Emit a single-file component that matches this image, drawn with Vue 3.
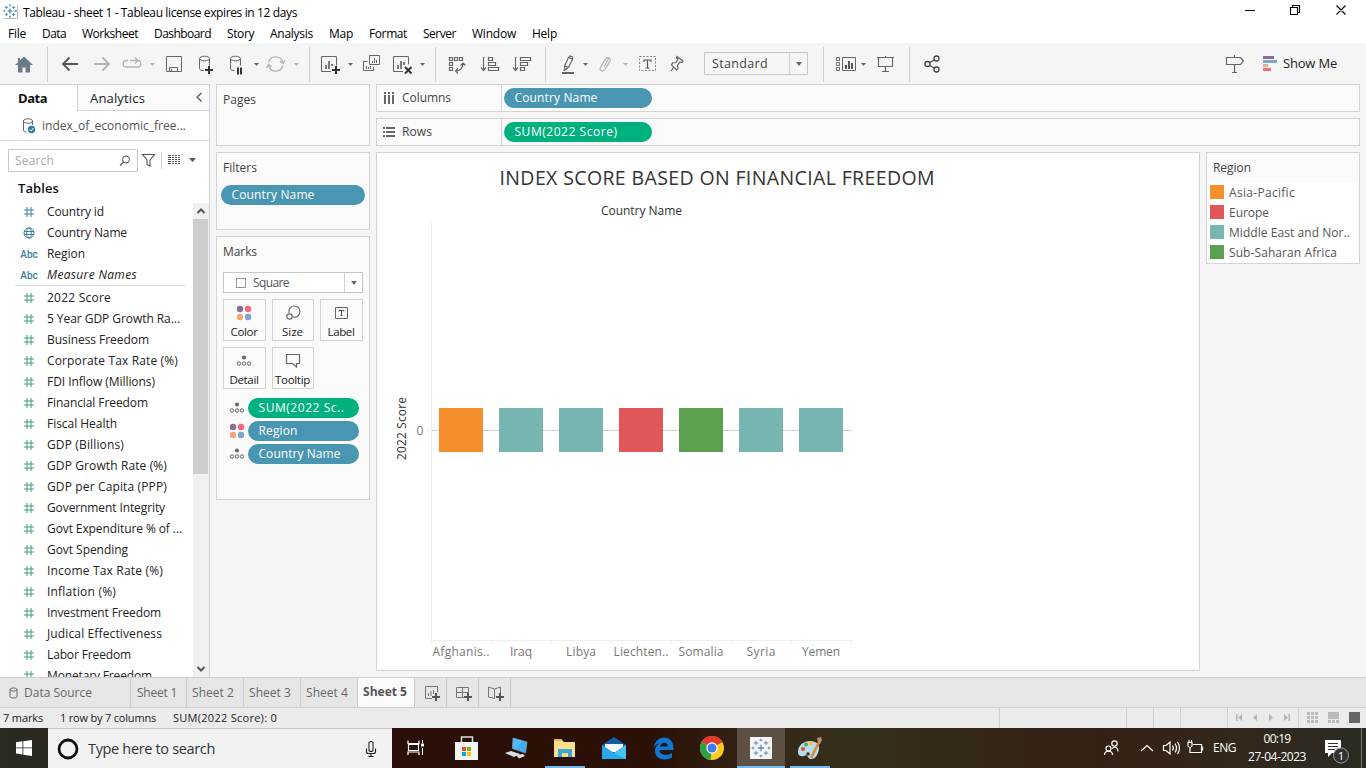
<script setup>
// Sets letter-spacing so a label occupies the given width in pixels.
const vFit = {
  mounted(el, { value }) {
    const n = el.textContent.length
    if (value && n) el.style.letterSpacing = (value - el.getBoundingClientRect().width) / n + 'px'
  }
}

const menus = [
  ['File', 18], ['Data', 24], ['Worksheet', 56], ['Dashboard', 57], ['Story', 27], ['Analysis', 43],
  ['Map', 24], ['Format', 38], ['Server', 33], ['Window', 44], ['Help', 25]
]

const G = '#666'
const L = '#b4b4b4'
const caret = (x, c = G) => `<path d="M${x - 2.5} 63h5l-2.5 3z" fill="${c}"/>`
const sep = x => `<path d="M${x + 0.5} 47v35" stroke="#cfcfcf"/>`
const plus = (x, y) => `<path d="M${x - 4} ${y}h8M${x} ${y - 4}v8" stroke="#333" stroke-width="2"/>`
const cyl = (x, y) => `<path d="M${x} ${y + 2}v10c0 1.500 2 2 4 2M${x} ${y + 2}c0-3 10-3 10 0s-10 3-10 0M${x + 10} ${y + 2}v7" fill="none" stroke="#666"/>`

const leftTools = [
  { x: 0, w: 56, d: `<path d="M24 56.500l9 8.500h-3v7.500h-4.500v-5h-3v5H18V65h-3l3-2.800V58h2v2.200z" fill="#6b7a89"/>` + sep(47) },
  { x: 56, w: 30, d: `<path d="M78 64H63M69.500 57.500L63 64l6.500 6.500" fill="none" stroke="#555" stroke-width="1.800"/>` },
  { x: 86, w: 30, d: `<path d="M94 64h15M102.500 57.500L109 64l-6.500 6.500" fill="none" stroke="${L}" stroke-width="1.800"/>` },
  { x: 116, w: 44, d: `<path d="M128 60.500h-1.500a3 3 0 0 0 0 6.500h11a3 3 0 0 0 0-6.500M130 60.500h8M135 57.500l3 3-3 3" fill="none" stroke="${L}" stroke-width="1.300"/>` + caret(152.5, L) },
  { x: 160, w: 28, d: `<path d="M166.500 56.500h15v15h-15zM169.500 71.500v-4h8v4M171.500 69v2" fill="none" stroke="${G}"/>` },
  { x: 188, w: 34, d: cyl(199.5, 56.5) + plus(209, 70) },
  { x: 222, w: 42, d: cyl(230.5, 56.5) + `<path d="M238 67.500v7M241 67.500v7" stroke="#333" stroke-width="2"/>` + caret(256.500) },
  { x: 264, w: 50, d: `<path d="M268.500 62.500a7.500 7.500 0 0 1 14.500 0M283 65.500a7.500 7.500 0 0 1-14.500 0M280 61l3 2.500 2-3.500M266.500 68l2-3.500 3 2.500" fill="none" stroke="${L}" stroke-width="1.300"/>` + caret(296.5, L) + sep(309) },
  { x: 314, w: 44, d: `<path d="M331 71.500h-9.500v-15h15v9" fill="none" stroke="${G}"/><path d="M326 69v-4M329 69v-8M332 66v-2" stroke="#555" stroke-width="1.500"/>` + plus(336, 70) + caret(350.500) },
  { x: 358, w: 28, d: `<path d="M369.500 55.500h10v9h-10zM367.500 61.500h-4v9h10v-4" fill="none" stroke="${G}"/><path d="M372.500 63v-2M374.500 63v-5M376.500 63v-3M366.500 69v-3M368.500 69v-2M370.500 69v-3" stroke="#666"/>` },
  { x: 386, w: 54, d: `<path d="M403 71.500h-9.500v-15h15v8" fill="none" stroke="${G}"/><path d="M398 69v-4M401 69v-8M404 65v-3" stroke="#555" stroke-width="1.500"/><path d="M405 67l6.500 6.500m0-6.500l-6.500 6.500" stroke="#333" stroke-width="2"/>` + caret(422.500) + sep(435) },
  { x: 440, w: 34, d: `<g fill="none" stroke="${G}"><path d="M449.500 57.500h3v3h-3zM454.500 57.500h3v3h-3zM459.500 57.500h3v3h-3zM449.500 62.500h3v3h-3zM449.500 67.500h3v3h-3zM456 71c4 0 7-3 7-7.500M460.500 65.500l2.500-2.500 2.500 2.500M458 68.500l-2.500 2.500 2.500 2.500" stroke-width="1.200"/></g>` },
  { x: 474, w: 32, d: `<path d="M483.500 57v13M481 67.500l2.500 3 2.500-3M488.500 57.500h4v3h-4zM488.500 62.500h7v3h-7zM488.500 67.500h10v3h-10z" fill="none" stroke="${G}" stroke-width="1.200"/>` },
  { x: 506, w: 44, d: `<path d="M515.500 57v13M513 67.500l2.500 3 2.500-3M520.500 57.500h10v3h-10zM520.500 62.500h7v3h-7zM520.500 67.500h4v3h-4z" fill="none" stroke="${G}" stroke-width="1.200"/>` + sep(545) },
  { x: 550, w: 42, d: `<path d="M564.500 66l4-8.500 1.500-1.500 2.500 1 .2 2-4 8-3.700 3zM564.500 66l4 1.500M568.500 57.500l4 1.500M563.500 70.500l1.500-1" fill="none" stroke="${G}" stroke-width="1.200"/><path d="M562 73h12" stroke="#555" stroke-width="1.800"/>` + caret(585.5) },
  { x: 592, w: 40, d: `<path d="M601.500 66l4-7c2-3 6-1 4.500 2l-5 8.500c-2 3-6.500 1-4.500-2.500l5-8c1.500-2 3.500-1 2.500 1l-4 7" fill="none" stroke="${L}" stroke-width="1.200"/>` + caret(625.5, L) },
  { x: 632, w: 30, d: `<path d="M639.500 56.500h16v14h-16z" fill="none" stroke="#888" stroke-dasharray="2 1.500"/><path d="M644 62v-2h7v2M647.500 60v8M645.500 68h4" fill="none" stroke="#555" stroke-width="1.200"/>` },
  { x: 662, w: 42, d: `<path d="M677 56.500l6 4.500-1 1.500-2-.5-2.500 3.500.5 3-1.500 1.500-5-5 1-2 3.500-.5 2-3.500-1.500-1zM673.500 67.500l-2.500 3.500" fill="none" stroke="${G}" stroke-width="1.200"/>` }
]
const midTools = [
  { x: 808, w: 64, d: sep(823) + `<path d="M836.500 57.500h3v3h-3zM836.500 62.500h3v3h-3zM836.500 67.500h3v3h-3zM842.500 57.500h13v13h-13z" fill="none" stroke="${G}"/><path d="M846 69v-4M849 69v-8M852 69v-6" stroke="#555" stroke-width="2"/>` + caret(863.500) },
  { x: 872, w: 42, d: `<path d="M877 57.500h17M878.500 57.500v9h14v-9M885.500 56v1M885.500 66.500v5M882 71.500h7" fill="none" stroke="${G}" stroke-width="1.200"/>` + sep(909) },
  { x: 914, w: 40, d: `<path d="M930 62.500l5-3M930 65.500l5 3" stroke="#444" stroke-width="1.200"/><g fill="none" stroke="#444" stroke-width="1.300"><circle cx="927.500" cy="64" r="2.500"/><circle cx="936.500" cy="58.500" r="2.500"/><circle cx="936.500" cy="69.500" r="2.500"/></g>` }
]
const rightTools = [
  { x: 1220, w: 38, d: `<path d="M1226.500 57.500h14l3 3.500-3 3.500h-14zM1234.500 55v2M1234.500 64.500v8M1232 72.500h5" fill="none" stroke="${G}" stroke-width="1.200"/>` },
  { x: 1258, w: 25, d: `<path d="M1263 56h11v3h-11z" fill="#8b6d9c"/><path d="M1263 60h14v3h-14z" fill="#7ea6cf"/><path d="M1263 64h5v3h-5z" fill="#f1a886"/><path d="M1263 68h8v3h-8z" fill="#f6697c"/>` }
]

const dims = [
  { t: 'Country id', w: 57, k: 'hash' }, { t: 'Country Name', w: 80, k: 'globe' },
  { t: 'Region', w: 38, k: 'abc' }, { t: 'Measure Names', w: 90, k: 'abc', i: true }
]
const measures = [
  ['2022 Score', 64], ['5 Year GDP Growth Ra...', 133], ['Business Freedom', 102], ['Corporate Tax Rate (%)', 131],
  ['FDI Inflow (Millions)', 108], ['Financial Freedom', 101], ['Fiscal Health', 70], ['GDP (Billions)', 77],
  ['GDP Growth Rate (%)', 120], ['GDP per Capita (PPP)', 120], ['Government Integrity', 118],
  ['Govt Expenditure % of ...', 135], ['Govt Spending', 81], ['Income Tax Rate (%)', 116], ['Inflation (%)', 69],
  ['Investment Freedom', 114], ['Judical Effectiveness', 115], ['Labor Freedom', 84], ['Monetary Freedom', 105]
]

const dots = '<circle cx="5" cy="5" r="3.200" fill="#8b6d9c"/><circle cx="13" cy="5" r="3.200" fill="#f6697c"/><circle cx="5" cy="13" r="3.200" fill="#f1a67a"/><circle cx="13" cy="13" r="3.200" fill="#7ea3cc"/>'
const detail = '<circle cx="9" cy="5.500" r="2" fill="#666"/><g fill="none" stroke="#666"><circle cx="4" cy="11.500" r="1.700"/><circle cx="9" cy="11.500" r="1.700"/><circle cx="14" cy="11.500" r="1.700"/></g>'
const markButtons = [
  { t: 'Color', w: 27, d: dots },
  { t: 'Size', w: 21, d: '<g fill="none" stroke="#666" stroke-width="1.200"><path d="M5 9a5.600 5.600 0 1 1 4 4"/><circle cx="5.500" cy="12.500" r="2.700"/></g>' },
  { t: 'Label', w: 27, d: '<path d="M3.500 3.500h12v11h-12z" fill="none" stroke="#666"/><path d="M7 7.500v-1h5v1M9.500 6.500v5M8.500 11.500h2" fill="none" stroke="#555"/>' },
  { t: 'Detail', w: 29, d: detail },
  { t: 'Tooltip', w: 35, d: '<path d="M2.500 2.500h13v9h-3v3.500l-4-3.500h-6z" fill="none" stroke="#666" stroke-width="1.200"/>' }
]
const marks = [
  { t: 'SUM(2022 Sc..', w: 86, c: 'green', d: detail },
  { t: 'Region', w: 39, c: 'blue', d: dots },
  { t: 'Country Name', w: 82, c: 'blue', d: detail }
]

const cells = [
  { t: 'Afghanis..', w: 57, c: '#f58f2c' }, { t: 'Iraq', w: 22, c: '#77b5b0' }, { t: 'Libya', w: 30, c: '#77b5b0' },
  { t: 'Liechten..', w: 55, c: '#e15759' }, { t: 'Somalia', w: 45, c: '#5aa04f' }, { t: 'Syria', w: 29, c: '#77b5b0' },
  { t: 'Yemen', w: 38, c: '#77b5b0' }
]
const legend = [
  ['Asia-Pacific', 66, '#f58f2c'], ['Europe', 40, '#e15759'],
  ['Middle East and Nor..', 121, '#77b5b0'], ['Sub-Saharan Africa', 108, '#5aa04f']
]
const sheets = [['Sheet 1', 40], ['Sheet 2', 42], ['Sheet 3', 42], ['Sheet 4', 42]]
const addPlus = '<path d="M12 14h8M16 10v8" stroke="#555" stroke-width="2"/>'
const adders = [
  '<path d="M12 15.500H5.500v-12h12v6M8.500 13v-3M11 13V8M13.500 11V7" fill="none" stroke="#777"/>' + addPlus,
  '<path d="M12 14.500H4.500v-10h12v5M10.500 4.500v10M4.500 9.500h12" fill="none" stroke="#777"/>' + addPlus,
  '<path d="M11 15.500L4.500 14V4L10.500 6l6-2v6M10.500 6v9" fill="none" stroke="#777"/>' + addPlus
]

const burst = (cx, cy, c, k = 1) => {
  const cross = (x, y, s, w) => `<path d="M${cx + x - s} ${cy + y}h${2 * s}M${cx + x} ${cy + y - s}v${2 * s}" stroke="${c}" stroke-width="${w * k}"/>`
  return cross(0, 0, 3.3, 1.5) + [[-5, -5], [5, -5], [-5, 5], [5, 5]].map(p => cross(p[0], p[1], 2.2, 1.1)).join('') +
    [[0, -8], [0, 8], [-8, 0], [8, 0]].map(p => cross(p[0], p[1], 1.5, 1)).join('')
}
const tasks = [
  { x: 392, w: 48, d: '<path d="M408 740.500v3h11v-3M408 755v-3h11v3M408.500 744.500h10v6h-10z" fill="none" stroke="#fff" stroke-width="1.200"/><path d="M422.500 740v3M422.500 748v7" stroke="#fff"/><path d="M421 743.500h3v3h-3z" fill="#fff"/>' },
  { x: 440, w: 54, d: '<path d="M461.500 743v-6h11v6" fill="none" stroke="#ddd" stroke-width="1.500"/><path d="M455 742h23v18h-23z" fill="#f3f3f3"/><path d="M462 747h4v4h-4z" fill="#f25022"/><path d="M467 747h4v4h-4z" fill="#7fba00"/><path d="M462 752h4v4h-4z" fill="#00a4ef"/><path d="M467 752h4v4h-4z" fill="#ffb900"/>' },
  { x: 494, w: 46, d: '<path d="M513 738l14 4-1.500 11-13-4.500z" fill="#3daef5" stroke="#7f9fb2" stroke-width=".8"/><path d="M513 748l1-9.500 8 2.500-6 8z" fill="#6cc6ff" opacity=".5"/><path d="M505 753l6-2 9 3-6 3zM516 755l7-1 2 2-6 2.500z" fill="#d7dde2"/>' },
  { x: 540, w: 50, u: [545, 40], d: '<path d="M554 740h8l2 2h11v15h-21z" fill="#fbe08c"/><path d="M554 739h8v2h-8z" fill="#e9b949"/><path d="M558 757v-8h14v8h-4v-4h-6v4z" fill="#39a9dc"/>' },
  { x: 590, w: 48, d: '<path d="M602 745l12-8 12 8v14h-24z" fill="#0d5ea6"/><path d="M605 744h18v8h-18z" fill="#f6f9fc"/><path d="M602 745l12 8 12-8v14h-24z" fill="#28a8ea"/><path d="M614 753l12-8v14z" fill="#46c2f5"/>' },
  { x: 638, w: 50, d: '<path d="M653.500 747c1.500-5 5-9.500 10.500-9.500 6 0 9.500 4.500 9.500 11v1.500h-14c0 5 7.500 6.500 12.500 3v4.500c-8 4-17 1.500-17-6.500 0-4 2.500-6.500 5-8-3 1-5 2.500-6.500 4zM660 746.500h8c0-5-7-5-8 0z" fill="#0b78d7" fill-rule="evenodd"/>' },
  { x: 688, w: 49, d: '<circle cx="712" cy="748" r="12" fill="#f9c922"/><path d="M712 748L701.600 742a12 12 0 0 1 20.800 0z" fill="#e33b2e"/><path d="M712 748l-1.500 12A12 12 0 0 1 701.600 742z" fill="#2da04b"/><path d="M701.600 742A12 12 0 0 1 722.600 742.500H712z" fill="#e33b2e"/><circle cx="712" cy="748" r="5.700" fill="#fff"/><circle cx="712" cy="748" r="4.500" fill="#3b7ded"/>' },
  { x: 737, w: 48, u: [737, 48], active: true, d: '<path d="M750 737h22v22h-22z" fill="#f5f5f5"/>' + burst(761, 748, '#5a8fae', 0.9) },
  { x: 785, w: 50, u: [790, 40], d: '<path d="M798 752c0-9 10-13 17-10 6 3 4 9 2 13-2 5-8 5-9 2-1-2-2-2-4-1-3 1-6 0-6-4z" fill="#b9dcec"/><circle cx="803" cy="749" r="2" fill="#e4483b"/><circle cx="806" cy="744.500" r="2" fill="#58b03c"/><circle cx="811" cy="743" r="2" fill="#f2c12d"/><circle cx="808" cy="754" r="1.800" fill="#333"/><path d="M811 758l8-16" stroke="#d98a35" stroke-width="2.500"/><path d="M818 743l-1-5 4-1 1 3-2 4z" fill="#bd8a63"/>' }
]
const tray = '<g fill="none" stroke="#fff" stroke-width="1.200"><circle cx="1114.500" cy="743.500" r="2.700"/><path d="M1112 748.500c3-2.500 6-1 6 3"/><circle cx="1108.500" cy="748.500" r="2.500"/><path d="M1104.500 755c0-5 8-5 8 0"/><path d="M1141 751l6-5.500 6 5.500"/><path d="M1163.500 745.500h2.500l4-3.500v12l-4-3.500h-2.500zM1172.500 745.500q1.800 2.500 0 5M1175 743.500q3 4.500 0 9M1177.500 742q4 6 0 12"/><path d="M1193 744.500h8.500v8h-11.500M1188 742.500h4v3.500q-2 3-4 0zM1190 748v5M1189 740v2M1191.500 740v2M1202.500 746.500v4"/></g>'
</script>

<template>
  <div class="app">
    <header class="title">
      <svg width="20" height="24" viewBox="0 0 20 24"><path d="M3.500 18.500h14V5" fill="none" stroke="#bbb" /><g transform="translate(10 11) scale(.72)" v-html="burst(0, 0, '#2f7ca8')"></g></svg>
      <span v-fit="274" class="t">Tableau - sheet 1 - Tableau license expires in 12 days</span>
      <svg class="winctl" width="120" height="24" viewBox="1240 0 120 24"><path d="M1245 10.500h10M1290.500 7.500h7v7h-7zM1292.500 7v-1.500h7v7h-2M1336.500 5.500l9 9m0-9l-9 9" fill="none" stroke="#000" stroke-width="1.100" /></svg>
    </header>
    <nav class="menu"><span v-for="m in menus" :key="m[0]" v-fit="m[1]" class="t">{{ m[0] }}</span></nav>

    <div class="toolbar">
      <svg v-for="i in leftTools" :key="i.x" :width="i.w" height="41" :viewBox="`${i.x} 43 ${i.w} 41`" v-html="i.d"></svg>
      <div class="select"><span v-fit="56" class="t">Standard</span><i><b></b></i></div>
      <svg v-for="i in midTools" :key="i.x" :width="i.w" height="41" :viewBox="`${i.x} 43 ${i.w} 41`" v-html="i.d"></svg>
      <div class="grow"></div>
      <svg v-for="i in rightTools" :key="i.x" :width="i.w" height="41" :viewBox="`${i.x} 43 ${i.w} 41`" v-html="i.d"></svg>
      <span class="t showme" v-fit="54">Show Me</span>
    </div>

    <main>
      <aside class="pane">
        <div class="tabs">
          <div class="tab on"><span v-fit="29" class="t">Data</span></div>
          <div class="tab off"><span v-fit="55" class="t">Analytics</span>
            <svg width="8" height="12" viewBox="0 0 8 12"><path d="M6.500 1L2 5l4.500 4.500" fill="none" stroke="#555" stroke-width="1.200" /></svg>
          </div>
        </div>
        <div class="source">
          <svg width="16" height="18" viewBox="0 0 16 18"><path d="M2.500 4v9c0 1.500 1 2 3 2M2.500 4c0-3 9-3 9 0s-9 3-9 0M11.500 4v4" fill="none" stroke="#666" /><circle cx="10.500" cy="12.500" r="3.700" fill="#2f7f9f" /><path d="M8.500 12.500l1.500 1.500 2.500-3" fill="none" stroke="#fff" /></svg>
          <span v-fit="144" class="t">index_of_economic_free...</span>
        </div>
        <div class="search">
          <div class="box"><span v-fit="39" class="t">Search</span>
            <svg width="12" height="12" viewBox="0 0 12 12"><circle cx="7" cy="4.500" r="3.500" fill="none" stroke="#555" /><path d="M4.500 7L1 10.500" stroke="#555" stroke-width="1.200" /></svg>
          </div>
          <svg width="68" height="24" viewBox="138 149 68 24"><path d="M142.500 154.500h12l-4.500 5.500v6l-3-1.500V160z" fill="none" stroke="#555" stroke-width="1.100" /><path d="M161.500 152v17" stroke="#ccc" /><path d="M168 155.500h12M168 157.500h12M168 159.500h12M168 161.500h12M168 163.500h12" stroke="#555" stroke-dasharray="3 1 2 1 2 1 2 1" /><path d="M189 158h7l-3.500 4z" fill="#555" /></svg>
        </div>
        <div class="tables"><span v-fit="41" class="t">Tables</span></div>
        <div class="fields">
          <div class="list">
            <div v-for="d in dims" :key="d.t" class="row">
              <div class="ic">
                <svg v-if="d.k === 'hash'" width="12" height="12" viewBox="0 0 12 12"><path d="M1 4h10M1 8h10M4 1v10M8 1v10" stroke="#3b7f9c" fill="none" /></svg>
                <svg v-else-if="d.k === 'globe'" width="12" height="12" viewBox="0 0 12 12"><g fill="none" stroke="#3b7f9c"><circle cx="6" cy="6" r="5" /><ellipse cx="6" cy="6" rx="2.300" ry="5" /><path d="M1 4.500h10M1 7.500h10" /></g></svg>
                <em v-else>Abc</em>
              </div>
              <span v-fit="d.w" class="t" :class="{ it: d.i }">{{ d.t }}</span>
            </div>
            <hr>
            <div v-for="m in measures" :key="m[0]" class="row">
              <div class="ic"><svg width="12" height="12" viewBox="0 0 12 12"><path d="M1 4h10M1 8h10M4 1v10M8 1v10" stroke="#3f9b7d" fill="none" /></svg></div>
              <span v-fit="m[1]" class="t">{{ m[0] }}</span>
            </div>
          </div>
          <div class="scroll">
            <svg width="16" height="16" viewBox="0 0 16 16"><path d="M4.500 10L8 6.500l3.500 3.500" fill="none" stroke="#555" stroke-width="2" /></svg>
            <div class="thumb"></div>
            <div class="grow"></div>
            <svg width="16" height="16" viewBox="0 0 16 16"><path d="M4.500 6L8 9.500 11.500 6" fill="none" stroke="#555" stroke-width="2" /></svg>
          </div>
        </div>
      </aside>

      <section class="cards">
        <div class="card pages"><h4><span v-fit="33" class="t">Pages</span></h4></div>
        <div class="card filters"><h4><span v-fit="34" class="t">Filters</span></h4>
          <div class="pill blue"><span v-fit="83" class="t">Country Name</span></div>
        </div>
        <div class="card marks"><h4><span v-fit="34" class="t">Marks</span></h4>
          <div class="mtype"><s></s><span v-fit="36" class="t">Square</span><i><b></b></i></div>
          <div class="mgrid">
            <div v-for="b in markButtons" :key="b.t" class="mb"><svg width="18" height="18" viewBox="0 0 18 18" v-html="b.d"></svg><span v-fit="b.w" class="t">{{ b.t }}</span></div>
          </div>
          <div v-for="m in marks" :key="m.t" class="mrow"><svg width="18" height="18" viewBox="0 0 18 18" v-html="m.d"></svg><div class="pill" :class="m.c"><span v-fit="m.w" class="t">{{ m.t }}</span></div></div>
        </div>
      </section>

      <section class="work">
        <div class="shelf"><div class="lab"><svg width="14" height="14" viewBox="0 0 14 14"><path d="M3 1v2M7 1v2M11 1v2M3 4v9M7 4v9M11 4v9" stroke="#666" stroke-width="2" /></svg><span v-fit="49" class="t">Columns</span></div>
          <div class="pill blue"><span v-fit="83" class="t">Country Name</span></div></div>
        <div class="shelf"><div class="lab"><svg width="14" height="14" viewBox="0 0 14 14"><path d="M1 3h2M1 7h2M1 11h2M4 3h9M4 7h9M4 11h9" stroke="#666" stroke-width="2" /></svg><span v-fit="30" class="t">Rows</span></div>
          <div class="pill green"><span v-fit="103" class="t">SUM(2022 Score)</span></div></div>
        <div class="lower">
          <div class="view">
            <svg width="822" height="517" viewBox="377 153 822 517">
              <text x="499.500" y="185" font-size="19.500" font-weight="500" fill="#333" textLength="435">INDEX SCORE BASED ON FINANCIAL FREEDOM</text>
              <text x="601" y="215" font-size="12" fill="#333" textLength="81">Country Name</text>
              <path d="M431.500 221v420M431 640.500h421M426 430.500h5" fill="none" stroke="#efefef" />
              <path v-for="n in 8" :key="n" :d="`M${371.5 + n * 60} 640v4`" stroke="#efefef" />
              <path d="M432 430.500h419" stroke="#bdbdbd" stroke-dasharray="2 1" />
              <text x="416.500" y="435" font-size="12" fill="#787878">0</text>
              <text transform="translate(406 460) rotate(-90)" font-size="12" fill="#333" textLength="63">2022 Score</text>
              <g v-for="(c, i) in cells" :key="c.t">
                <rect :x="439 + i * 60" y="408" width="44" height="44" :fill="c.c" />
                <text :x="461 + i * 60 - c.w / 2" y="656" font-size="12" fill="#787878" :textLength="c.w">{{ c.t }}</text>
              </g>
            </svg>
          </div>
          <div class="legend">
            <h4><span v-fit="38" class="t">Region</span></h4>
            <div v-for="l in legend" :key="l[0]" class="lg"><svg width="14" height="14"><rect width="14" height="14" :fill="l[2]" /></svg><span v-fit="l[1]" class="t">{{ l[0] }}</span></div>
          </div>
        </div>
      </section>
    </main>

    <div class="sheets">
      <div class="ds"><svg width="10" height="12" viewBox="0 0 10 12"><path d="M1 2.500v7c0 2 7 2 7 0v-7c0-2-7-2-7 0s7 2 7 0" fill="none" stroke="#666" /></svg><span v-fit="68" class="t">Data Source</span></div>
      <div v-for="s in sheets" :key="s[0]" class="sh"><span v-fit="s[1]" class="t">{{ s[0] }}</span></div>
      <div class="sh cur"><span v-fit="44" class="t">Sheet 5</span></div>
      <div v-for="(a, i) in adders" :key="i" class="add"><svg width="22" height="20" viewBox="0 0 22 20" v-html="a"></svg></div>
    </div>

    <div class="status">
      <span v-fit="40" class="t">7 marks</span><span v-fit="96" class="t">1 row by 7 columns</span><span v-fit="104" class="t">SUM(2022 Score): 0</span>
      <div class="grow"></div>
      <svg width="368" height="20" viewBox="998 708 368 20">
        <path d="M999.500 708v20M1126.500 708v20M1153.500 708v20M1180.500 708v20M1227.500 708v20M1298.500 708v20" stroke="#cfcfcf" />
        <path d="M1236 714h1.500v7h-1.500zM1242 714v7l-4-3.500zM1257 714v7l-4-3.500zM1269 714v7l4-3.500zM1284 714v7l4-3.500zM1288.500 714h1.500v7h-1.500z" fill="#b5b5b5" />
        <path d="M1307 713.500h11M1307 717.500h11M1307 721.500h11" stroke="#bbb" stroke-width="3" stroke-dasharray="3 1" />
        <path d="M1328 712h11v7h-11zM1328 720h3v3h-3zM1332 720h3v3h-3zM1336 720h3v3h-3z" fill="#bbb" /><path d="M1349 712h11v11h-11z" fill="#666" />
      </svg>
    </div>

    <footer class="taskbar">
      <div class="start"><svg width="16" height="16" viewBox="0 0 16 16"><path d="M0 2.200L6.500 1.300v6.200H0zM7.300 1.200L16 0v7.500H7.300zM0 8.300h6.500v6.200L0 13.600zM7.300 8.300H16V16l-8.700-1.200z" fill="#fff" /></svg></div>
      <div class="find"><svg width="22" height="22" viewBox="0 0 22 22"><circle cx="11" cy="11" r="9" fill="none" stroke="#111" stroke-width="2.800" /></svg><span v-fit="127" class="t">Type here to search</span>
        <svg class="mic" width="12" height="16" viewBox="0 0 12 16"><path d="M4 1.500q2-2 4 0v8q-2 2-4 0zM1.500 7.500v3q0 2 2 2h5q2 0 2-2v-3M6 12.500v3M3.500 15.500h5" fill="none" stroke="#222" stroke-width="1.100" /></svg></div>
      <div v-for="k in tasks" :key="k.x" class="task" :class="{ active: k.active }">
        <svg :width="k.w" height="40" :viewBox="`${k.x} 728 ${k.w} 40`"><g v-html="k.d"></g><rect v-if="k.u" :x="k.u[0]" y="766" :width="k.u[1]" height="2" fill="#76b9ed" /></svg>
      </div>
      <div class="grow"></div>
      <svg width="112" height="40" viewBox="1100 728 112 40" v-html="tray"></svg>
      <span v-fit="23" class="t eng">ENG</span>
      <div class="clock"><span v-fit="27" class="t">00:19</span><span v-fit="58" class="t">27-04-2023</span></div>
      <svg width="50" height="40" viewBox="1316 728 50 40"><path d="M1325 740h16v13h-9l-4 4v-4h-3z" fill="#fff" /><path d="M1328 743.500h10M1328 746.500h10M1328 749.500h7" stroke="#333" /><circle cx="1341" cy="755.500" r="7.500" fill="#333" stroke="#999" /><text x="1337.800" y="759.500" fill="#fff" font-size="11.500">1</text><path d="M1361.500 728v40" stroke="#777" /></svg>
    </footer>
  </div>
</template>

<style>
html, body { margin: 0; background: #f5f5f5; }
</style>
<style scoped>
.app { width: 1366px; height: 768px; overflow: hidden; display: flex; flex-direction: column; font: 12px/16px "Open Sans", "Noto Sans", sans-serif; color: #222; }
.app * { box-sizing: border-box; }
svg { display: block; flex: none; }
.t { display: inline-block; white-space: pre; flex: none; }
.grow { flex: 1; }
h4 { margin: 0; font-weight: 400; font-size: 12px; color: #444; }
.title { height: 24px; background: #fff; display: flex; align-items: center; padding-right: 6px; color: #000; }
.title .t { margin: 1px 0 0 3px; }
.winctl { margin-left: auto; }
.menu { height: 19px; background: #fff; display: flex; gap: 16px; padding: 2px 8px; color: #000; }
.toolbar { height: 41px; display: flex; background: #f5f5f5; flex: none; }
.select { width: 104px; height: 23px; margin-top: 9px; border: 1px solid #c6c6c6; border-radius: 1px; display: flex; align-items: center; justify-content: space-between; padding-left: 7px; color: #444; font-size: 12.5px; }
.select i, .mtype i { height: 100%; width: 18px; border-left: 1px solid #d4d4d4; display: flex; align-items: center; justify-content: center; }
.select b, .mtype b { border: 3.500px solid transparent; border-top: 4px solid #666; border-bottom: 0; }
.showme { margin: 12px 29px 0 0; font-size: 13px; }
main { height: 593px; display: flex; flex: none; }
.pane { width: 210px; background: #fff; border-right: 1px solid #d4d4d4; display: flex; flex-direction: column; border-top: 1px solid #d4d4d4; }
.tabs { display: flex; height: 26px; font-size: 13px; }
.tab { display: flex; align-items: center; }
.on { width: 77px; padding-left: 18px; font-weight: 700; color: #111; }
.off { flex: 1; border-left: 1px solid #d4d4d4; border-bottom: 1px solid #d4d4d4; background: #fafafa; padding: 0 6px 0 12px; justify-content: space-between; }
.source { height: 30px; border-bottom: 1px solid #dedede; display: flex; align-items: center; padding-left: 21px; gap: 5px; color: #555; }
.search { display: flex; padding: 8px 0 0 8px; height: 32px; }
.box { width: 130px; height: 23px; border: 1px solid #c6c6c6; border-radius: 1px; display: flex; align-items: center; justify-content: space-between; padding: 0 6px; color: #aaa; }
.tables { height: 30px; padding: 6px 0 0 18px; line-height: 18px; font-size: 13px; font-weight: 600; color: #111; }
.fields { flex: 1; display: flex; overflow: hidden; min-height: 0; }
.list { width: 193px; margin-top: -2px; }
.row { height: 21px; display: flex; align-items: center; }
.ic { width: 29px; margin: 0 3px 0 15px; padding-right: 1px; display: flex; justify-content: center; }
.ic em { font: 500 10px/12px Roboto, sans-serif; color: #3b7f9c; margin-top: 2px; }
.it { font-style: italic; }
hr { margin: 0 7px 1px 15px; border: 0; border-top: 1px solid #d9d9d9; }
.scroll { width: 16px; background: #f0f0f0; display: flex; flex-direction: column; }
.thumb { height: 255px; background: #cdcdcd; width: 15px; }
.cards { width: 166px; padding: 0 6px; display: flex; flex-direction: column; gap: 6px; }
.card { border: 1px solid #d4d4d4; background: #fafafa; }
.card h4 { padding: 7px 0 0 6px; }
.pages { height: 62px; }
.filters { height: 78px; }
.marks { height: 264px; }
.pill { height: 20px; border-radius: 10px; color: #fff; padding-left: 10.500px; line-height: 20px; }
.blue { background: #4996b2; }
.green { background: #00b180; }
.filters .pill { margin: 9px 4px 0; }
.mtype { margin: 12px 6px 6px; height: 21px; width: 140px; border: 1px solid #c6c6c6; background: #fff; display: flex; align-items: center; color: #555; }
.mtype s { width: 10px; height: 10px; border: 1px solid #999; margin: 0 7px 0 12px; }
.mtype i { margin-left: auto; }
.mgrid { display: grid; grid-template-columns: 43px 42px 43px; gap: 6px; padding-left: 6px; }
.mb { height: 42px; border: 1px solid #d4d4d4; display: flex; flex-direction: column; align-items: center; padding: 4px 1px 0 0; font-size: 11.500px; gap: 2px; }
.mrow { display: flex; margin: 3px 0 0 11px; align-items: center; gap: 2px; height: 20px; }
.mgrid + .mrow { margin-top: 9px; }
.mrow .pill { width: 111px; }
.work { flex: 1; padding-right: 6px; display: flex; flex-direction: column; gap: 6px; }
.shelf { height: 28px; border: 1px solid #d4d4d4; background: #fafafa; display: flex; align-items: center; }
.lab { width: 125px; height: 100%; border-right: 1px solid #d4d4d4; display: flex; align-items: center; padding-left: 5px; gap: 6px; color: #444; margin-right: 2px; }
.shelf .pill { width: 148px; }
.lower { display: flex; gap: 6px; align-items: flex-start; }
.view { width: 824px; height: 519px; border: 1px solid #d4d4d4; background: #fff; }
.legend { width: 154px; height: 112px; border: 1px solid #d4d4d4; background: #fff; }
.legend h4 { height: 29px; background: #fafafa; padding: 7px 0 0 6px; }
.lg { height: 20px; display: flex; align-items: center; padding-left: 3px; gap: 5px; color: #555; }
.lg .t { margin-top: 2px; }
.sheets { height: 31px; background: #e6e6e6; border-top: 1px solid #cfcfcf; border-bottom: 1px solid #cfcfcf; display: flex; color: #666; flex: none; }
.sheets > div { border-right: 1px solid #cacaca; display: flex; align-items: center; }
.ds { width: 131px; padding-left: 9px; gap: 5px; }
.sh { width: 57px; padding-left: 5px; }
.ds + .sh { width: 56px; padding-left: 6px; }
.sh.cur { background: #fafafa; font-weight: 700; color: #555; padding-bottom: 2px; }
.add { width: 32px; justify-content: center; }
.status { height: 20px; background: #ebebeb; display: flex; align-items: center; padding-left: 3px; font-size: 11px; flex: none; gap: 17px; }
.taskbar { height: 40px; flex: none; display: flex; background: linear-gradient(90deg, #2b2b22, #2a1009 392px, #2b1006 650px, #352918 780px, #33301c 850px, #352015 1100px, #33271b 1220px, #2b2b21); color: #fff; }
.start { width: 48px; display: flex; align-items: center; justify-content: center; }
.find { width: 344px; background: #f2f2f2; border-top: 1px solid #c8c4c4; color: #333; display: flex; align-items: center; padding: 0 15px 0 9px; font-size: 14.500px; }
.find .t { margin-left: 9px; }
.mic { margin-left: auto; }
.active { background: #5d5143; }
.eng { margin-left: 1px; align-self: center; }
.clock { width: 60px; margin: 2px 9px 0 11px; display: flex; flex-direction: column; align-items: center; line-height: 18px; }
</style>
